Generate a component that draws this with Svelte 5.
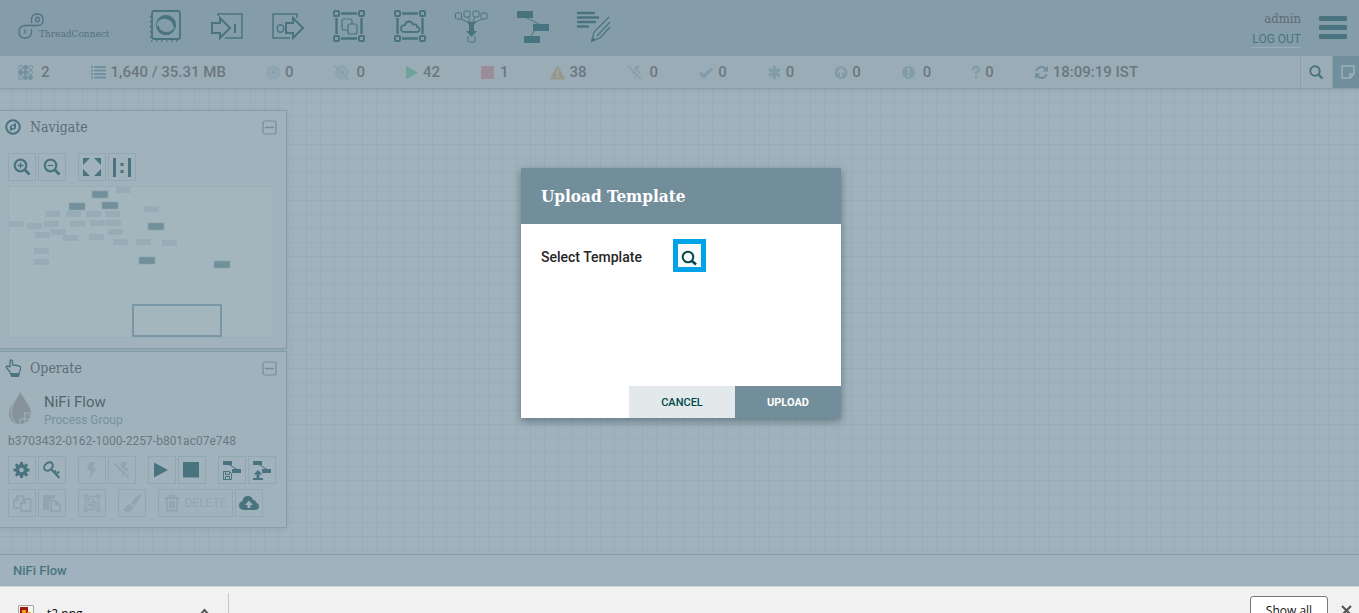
<script>
  const line = 'fill="none" stroke="currentColor"';
  const solid = 'fill="currentColor"';
  const corners = `<g ${line} stroke-width="2"><rect x="1" y="1" width="5" height="5" rx="1"/><rect x="26" y="1" width="5" height="5" rx="1"/><rect x="1" y="26" width="5" height="5" rx="1"/><rect x="26" y="26" width="5" height="5" rx="1"/></g><path ${line} stroke-width="2.4" d="M8 3.5h16M8 28.5h16M3.5 8v16M28.5 8v16"/>`;
  const bolt = 'M7 1h5L9.500 6H13L6 15l1.500-6H4z';

  const tools = [
    { label: 'Processor', art: `<rect x="2" y="1" width="28" height="28" rx="2" ${line} stroke-width="1.800"/><path ${line} stroke-width="1.500" stroke-dasharray="1.500 3.500" d="M.5 6v25M1 31h28"/><circle cx="16" cy="15" r="9.500" ${line} stroke-width="1"/><path ${solid} d="M7 13Q7 6 16 5q9 1 10 10l-2 4q-1-9-8-10-5-1-9 4zM25 18q-2 7-9 7-7 0-9.500-7l2-3q1 7 8 7 4 0 8.500-4z"/>` },
    { label: 'Input Port', art: `<path ${line} stroke-width="1.500" d="M7 6V4h24v24H14"/><path ${line} stroke-width="2" d="M1 13h8V8l10 10L9 28v-5H1z"/><path ${line} stroke-width="2" d="M24 14v9"/>` },
    { label: 'Output Port', art: `<path ${line} stroke-width="1.500" d="M25 8V4H1v24h17"/><path ${line} stroke-width="2" d="M14 13h7V8l10 10-10 10v-5h-7z"/><ellipse cx="8.500" cy="18.500" rx="3.200" ry="3.800" ${line} stroke-width="1.500"/>` },
    { label: 'Process Group', art: `${corners}<rect x="9" y="9" width="10" height="11" rx="2" ${line} stroke-width="1.200"/><rect x="15" y="14" width="9" height="10" rx="2" fill="#859da9" stroke="currentColor" stroke-width="1.200"/>` },
    { label: 'Remote Process Group', art: `${corners}<path ${line} stroke-width="1.800" d="M11 22q-4 0-4-3.500 0-3 4-3.500 1-3.500 4-3.500 3 0 4 3 4-1 4 2.500 3 .500 2.500 3-.500 2-3 2z"/>` },
    { label: 'Funnel', art: `<g ${line} stroke-width="1"><rect x=".5" y="3" width="6" height="6" rx="1"/><rect x="9" y="1" width="6" height="6" rx="1"/><rect x="18" y="1" width="6" height="6" rx="1"/><rect x="26" y="3" width="6" height="6" rx="1"/><path d="M6 9l6 3M13 7l2 4M20 7l-2 4M27 9l-6 3"/><path d="M13 26v5q0 1 1 1h5q1 0 1-1v-5"/></g><path ${solid} d="M11 11q5 1.500 11 0l-3 4v6h3l-5.500 6-5.500-6h3v-6z"/>` },
    { label: 'Template', art: `<path ${line} d="M9 7l14 7-8 12"/><path ${solid} d="M1 1h16v7H1zM17 14h16v7H17zM8 26h16v7H8z"/>` },
    { label: 'Label', art: `<path ${line} stroke-width="2.500" stroke-linecap="round" d="M1 3h16M1 7.500h20M1 12h17M1 16.500h10"/><path ${line} stroke-width="1.200" d="M32 7L17 22l-2 9 8-3L33 17M33 12L20 26"/><path ${solid} d="M15 27l4 3-5 2z"/>` }
  ];

  const stats = [
    { w: 18, text: '2', label: 'Active threads', c: '#7390a0', art: `<g ${line} stroke-width="1"><circle cx="2.500" cy="2.500" r="2"/><circle cx="12.500" cy="2.500" r="2"/><circle cx="12.500" cy="7.500" r="2"/><circle cx="2.500" cy="12.500" r="2"/></g><g ${solid}><circle cx="7.500" cy="2.500" r="2.400"/><circle cx="2.500" cy="7.500" r="2.400"/><circle cx="7.500" cy="7.500" r="2.400"/><circle cx="7.500" cy="12.500" r="2.400"/><circle cx="12.500" cy="12.500" r="2.400"/></g>` },
    { w: 15, text: '1,640 / 35.31 MB', label: 'Queued', c: '#7390a0', art: `<path ${line} stroke-width="2.200" d="M0 2h2M3 2h12M0 5.500h2M3 5.500h12M0 9h2M3 9h12M0 12.500h2M3 12.500h12"/>` },
    { w: 13, text: '0', label: 'Transmitting', c: '#86a0ad', art: `<g ${line} stroke-width="1.200"><circle cx="6.500" cy="7.500" r="6"/><circle cx="6.500" cy="7.500" r="3.800"/></g><circle cx="6.500" cy="7.500" r="2" ${solid}/>` },
    { w: 17, text: '0', label: 'Not transmitting', c: '#86a0ad', art: `<g ${line} stroke-width="1.200"><circle cx="8" cy="7.500" r="6.200"/><circle cx="8" cy="7.500" r="4"/><circle cx="8" cy="7.500" r="1.500"/><path d="M0 0l15 15" stroke-width="1.600"/></g>` },
    { w: 12, text: '42', label: 'Running', c: '#6ba496', art: `<path ${solid} d="M0 1l12 6.500L0 14z"/>` },
    { w: 14, text: '1', label: 'Stopped', c: '#9a8d97', art: `<path ${solid} d="M0 1h13v13H0z"/>` },
    { w: 15, text: '38', label: 'Invalid', c: '#96988b', art: `<path fill="currentColor" stroke="currentColor" stroke-width="1" stroke-linejoin="round" d="M7.500 1L14.500 14H.500z"/><path d="M7.500 5v4.500M7.500 11v2" stroke="#9aadb7" stroke-width="1.800"/>` },
    { w: 17, text: '0', label: 'Disabled', c: '#86a0ad', art: `<path ${solid} d="${bolt}"/><path fill="none" stroke="#9aadb7" stroke-width="1.500" d="M2 1l13 13"/><path ${line} stroke-width="1.500" d="M0 1l13 13"/>` },
    { w: 14, text: '0', label: 'Up to date', c: '#829ca9', art: `<path ${line} stroke-width="3.200" d="M1 7.500l4 4L13 3.500"/>` },
    { w: 13, text: '0', label: 'Locally modified', c: '#829ca9', art: `<path ${line} stroke-width="3.200" d="M6.500 1v13M1 4.200l11 6.600M12 4.200L1 10.800"/>` },
    { w: 12, text: '0', label: 'Stale', c: '#829ca9', art: `<circle cx="6" cy="7.500" r="6.500" ${solid}/><path fill="none" stroke="#9aadb7" stroke-width="2" d="M6 12V5M2.500 7.800L6 4.300l3.500 3.500"/>` },
    { w: 16, text: '0', label: 'Locally modified and stale', c: '#829ca9', art: `<circle cx="6.500" cy="7.500" r="6.500" ${solid}/><path stroke="#9aadb7" stroke-width="2" d="M6.500 3v5.500M6.500 10v2"/>` },
    { w: 8, text: '0', label: 'Sync failure', c: '#829ca9', art: `<path ${line} stroke-width="2.300" d="M1 5q0-3 3-3t3 2.500Q7 6.500 4 7.500v2.200M4 11v2.500"/>` },
    { w: 13, text: '18:09:19 IST', label: 'Last refreshed', c: '#6f8d9b', art: `<path ${line} stroke-width="2" d="M1.500 6q1-4 5-4 3 0 4.500 2.500M11.500 9q-1 4-5 4-3 0-4.500-2.500"/><path ${solid} d="M13 1v5.500H7.500zM0 14V8.500h5.500z"/>` }
  ];

  const lens = `<circle cx="7.500" cy="7.500" r="5.800" ${line} stroke-width="2.200"/><path ${line} stroke-width="2.800" d="M11.500 11.500l5 5"/>`;
  const navButtons = [
    [{ label: 'Zoom in', art: lens + `<path ${line} stroke-width="1.300" d="M4.500 7.500h6M7.500 4.500v6"/>` }, { label: 'Zoom out', art: lens + `<path ${line} stroke-width="1.300" d="M4.500 7.500h6"/>` }],
    [{ label: 'Fit', art: `<path ${solid} d="M0 0h7L0 7zM18 0v7l-7-7zM0 18v-7l7 7zM18 18h-7l7-7z"/>` }, { label: 'Actual size', art: `<path ${solid} d="M0 0h3v19H0zM15 0h3v19h-3zM7.500 5h3v3h-3zM7.500 12h3v3h-3z"/>` }]
  ];

  const tpl = `<path ${line} d="M5 3l10 6"/><path ${solid} d="M0 0h9v4H0zM9 8h9v4H9z"/>`;
  const opRows = [
    [
      [
        { label: 'Configuration', art: `<circle cx="8.500" cy="9" r="4.200" ${line} stroke-width="3.800"/><path ${line} stroke-width="3" d="M8.500 1v3M8.500 14v3M.500 9h3M13.500 9h3M2.800 3.300l2 2M12.200 12.700l2 2M14.200 3.300l-2 2M4.800 12.700l-2 2"/>` },
        { label: 'Access policies', art: `<ellipse cx="5.500" cy="5.500" rx="4.800" ry="3.600" transform="rotate(-40 5.500 5.500)" ${line} stroke-width="2"/><path ${line} stroke-width="2" d="M8 8l8.500 9M13 13.500l3-3M11 11.500l2-2"/>` }
      ],
      [
        { label: 'Enable', off: true, art: `<path ${solid} d="M6 1h6L10 7h4L6 18l2-8H4z"/>` },
        { label: 'Disable', off: true, art: `<path ${solid} d="M9 1h5L12 7h4L8 18l2-8H6z"/><path fill="none" stroke="#a0b3bd" stroke-width="1.500" d="M3 2l15 15"/><path ${line} stroke-width="1.800" d="M1 2l15 15"/>` }
      ],
      [
        { label: 'Start', art: `<path ${solid} d="M1 1.500L15 9 1 16.500z"/>` },
        { label: 'Stop', art: `<path ${solid} d="M0 1h16v15.500H0z"/>` }
      ],
      [
        { label: 'Create template', art: `${tpl}<path ${line} d="M.500 10.500h6l2 2v6h-8zM2.500 10.500v3h4v-3M2.500 18.500v-3h4v3"/>` },
        { label: 'Upload template', art: `${tpl}<path ${solid} d="M5 9l4.500 4.500H6.500V17h-3v-3.500H.500zM0 17h10v2H0z"/>` }
      ]
    ],
    [
      [
        { label: 'Copy', off: true, art: `<path ${line} stroke-width="1.800" d="M7 14H1V6l4-4h5v4M5 2v4H1M8 17V9l4-4h5.500v12zM12 5v4H8"/>` },
        { label: 'Paste', off: true, art: `<path ${solid} d="M0 1h12v4H8L6 8v8H0z"/><path ${line} stroke-width="1.800" d="M8 7h5l4 4v6.500H8zM13 7v4h4"/>` }
      ],
      [{ label: 'Group', off: true, art: `<g ${line} stroke-width="1.300"><path d="M1 1h3v3H1zM14 1h3v3h-3zM1 14h3v3H1zM14 14h3v3h-3zM4 2.500h10M4 15.500h10M2.500 4v10M15.500 4v10"/><rect x="5" y="5" width="6" height="6" rx="1"/><rect x="8" y="8" width="5" height="5" rx="1"/></g>` }],
      [{ label: 'Change color', off: true, art: `<path ${solid} d="M17 0q2 1 0 4l-6 8-3-3 6-7q2-2 3-2zM7 10l3 3q0 5-5 5-4 0-5-3 3 0 3-2 1-3 4-3z"/>` }],
      [
        { label: 'Delete', text: 'DELETE', off: true, art: `<path ${line} stroke-width="1.800" d="M1 4h14M3 4v12.500h10V4M5.500 4V1.500h5V4M6 7v7M8 7v7M10 7v7"/>` },
        { label: 'Upload', art: `<path ${solid} d="M4 16q-5-.500-5-4.500Q-1 8 2.500 7 3 2 8 2q4 0 5 4 3 0 3 2.500 3 1 3 4 0 3.500-4 3.500z"/><path fill="#a0b3bd" d="M9 6.500l4 4.500h-2.500v3h-3v-3H5z"/>` }
      ]
    ]
  ];

  const components = [[116, 187], [144, 206], [45, 211], [66, 211], [86, 211], [105, 211], [9, 221], [27, 223], [44, 221], [70, 221], [90, 220], [106, 220], [35, 232], [51, 229], [63, 235], [89, 234], [108, 229], [113, 239], [136, 239], [162, 240], [34, 248], [34, 259]];
  const groups = [[92, 191], [69, 203], [102, 202], [148, 223], [139, 257], [214, 261]];
</script>

{#snippet icon(art, w, h)}
  <svg width={w} height={h} viewBox="0 0 {w} {h}" aria-hidden="true">{@html art}</svg>
{/snippet}

{#snippet buttonRow(row)}
  <div class="buttons">
    {#each row as set}
      <div class="set">
        {#each set as b}
          <button class="tool" class:wide={b.text} disabled={b.off} aria-label={b.label}>
            {@render icon(b.art, 18, 19)}{#if b.text}<span>{b.text}</span>{/if}
          </button>
        {/each}
      </div>
    {/each}
  </div>
{/snippet}

{#snippet collapse(label)}
  <button class="collapse" aria-label={label}>
    {@render icon(`<rect x="1" y="1" width="13" height="13" rx="2" ${line} stroke-width="1.200"/><path ${line} stroke-width="1.500" d="M3 7.500h9"/>`, 15, 15)}
  </button>
{/snippet}

<div class="window">
  <div class="app">
    <header>
      <div class="logo">
        {@render icon(`<g ${line} stroke-width="1.300"><path d="M13.500 10V7q0-6 6-6 5.500 0 5.500 6 0 5.500-5.500 5.500H7Q1 13 1 19q0 6 6 6t6.500-6v-3" /><ellipse cx="19.500" cy="6.500" rx="1.800" ry="2.300"/><path d="M7 16.500v4"/></g>`, 27, 27)}
        <span>ThreadConnect</span>
      </div>
      <nav class="components" aria-label="Components">
        {#each tools as t}
          <button aria-label={t.label}>{@render icon(t.art, 33, 33)}</button>
        {/each}
      </nav>
      <div class="user">
        <span>admin</span>
        <a href="#logout">LOG OUT</a>
      </div>
      <button class="menu" aria-label="Menu"><i></i><i></i><i></i></button>
    </header>

    <div class="status">
      <div class="stats">
        {#each stats as s}
          <div class="stat" title={s.label}>
            <span class="glyph" style:color={s.c}>{@render icon(s.art, s.w, 15)}</span>
            <span>{s.text}</span>
          </div>
        {/each}
      </div>
      <button class="search" aria-label="Search">
        {@render icon(`<circle cx="6" cy="6" r="4.700" ${line} stroke-width="2"/><path ${line} stroke-width="2.400" d="M9.500 9.500l4 4"/>`, 15, 15)}
      </button>
      <button class="bulletin" aria-label="Bulletins">
        {@render icon(`<path fill="none" stroke="#9db1bb" stroke-width="1.500" d="M9 13H1V1h12v8zM9 13V9h4"/>`, 14, 14)}
      </button>
    </div>

    <main>
      <section class="panel">
        <div class="head">
          {@render icon(`<circle cx="8" cy="8" r="6.800" ${line} stroke-width="2"/><path ${solid} d="M11 4v5.500L5 12V7z"/><circle cx="8" cy="8" r="1.300" fill="#a0b3bd"/>`, 16, 16)}
          <h2>Navigate</h2>
          {@render collapse('Collapse Navigate')}
        </div>
        <div class="body nav-body">
          {@render buttonRow(navButtons)}
          <svg class="map" viewBox="9 187 264 150" width="264" height="150" role="img" aria-label="Birdseye">
            {#each components as [x, y]}<rect {x} {y} width="15" height="6" fill="#97acb7" />{/each}
            {#each groups as [x, y]}<rect {x} {y} width="16" height="7" fill="#71909c" stroke="#8ba2ac" stroke-width=".6" />{/each}
            <rect x="133" y="305" width="88" height="31" fill="none" stroke="#7594a5" stroke-width="1.800" />
          </svg>
        </div>
      </section>

      <section class="panel">
        <div class="head">
          {@render icon(`<path ${line} stroke-width="1.300" stroke-linejoin="round" d="M5 13L1 8q1-2 4 0V2q1-2 2.500 0v4q6 0 8 2 .500 3-1.500 6v2H6z"/><path ${solid} d="M6 14h8v4H6z"/>`, 16, 18)}
          <h2>Operate</h2>
          {@render collapse('Collapse Operate')}
        </div>
        <div class="body">
          <div class="context">
            <svg width="24" height="33" viewBox="0 0 24 33" aria-hidden="true">
              <path d="M12 0C17 9 23 14 23 21c0 7-4 11-11 11S1 28 1 21C1 14 8 9 12 0z" fill="#87939b" />
              <path d="M11 2Q3 14 3 21q0 6 4 9" fill="none" stroke="#a0b3bd" />
              <path d="M17 21v6M22 22v5M12 27h11M17 27v5M12 27v5M22 27v3M16 21h6" fill="none" stroke="#a0b3bd" />
            </svg>
            <div>
              <div class="name">NiFi Flow</div>
              <div class="type">Process Group</div>
            </div>
          </div>
          <div class="uuid">b3703432-0162-1000-2257-b801ac07e748</div>
          {#each opRows as row}{@render buttonRow(row)}{/each}
        </div>
      </section>
    </main>

    <footer>NiFi Flow</footer>

    <div class="veil">
      <div class="dialog" role="dialog" aria-labelledby="dialog-title">
        <h1 id="dialog-title">Upload Template</h1>
        <div class="content">
          <label for="browse">Select Template</label>
          <button id="browse" class="browse" aria-label="Browse for template">
            {@render icon(`<circle cx="7" cy="7" r="5.300" ${line} stroke-width="2"/><path ${line} stroke-width="2.500" d="M11 11l4 3.500"/>`, 16, 16)}
          </button>
        </div>
        <div class="actions">
          <button class="cancel">CANCEL</button>
          <button class="upload">UPLOAD</button>
        </div>
      </div>
    </div>
  </div>

  <div class="downloads">
    <button class="file">
      <svg width="16" height="16" viewBox="0 0 16 16" aria-hidden="true">
        <path d="M.5.5h15v15H.5z" fill="#f6f6ec" stroke="#a8a8a8" />
        <path d="M2 2h8v6H2z" fill="#a5190d" /><path d="M4 5h4v3H4zM9 7h4v3H9z" fill="#f0a51e" /><path d="M2 9h11v5H2z" fill="#c93d12" />
      </svg>
      <span>t2.png</span>
      {@render icon(`<path ${line} stroke-width="2" d="M1 7l4.500-5L10 7"/>`, 11, 11)}
    </button>
    <button class="all">Show all</button>
    <button class="close" aria-label="Close">
      {@render icon(`<path ${line} stroke-width="2.200" d="M1 1l9 9M10 1l-9 9"/>`, 11, 11)}
    </button>
  </div>
</div>

<style>
  :global(body) { margin: 0; overflow: hidden; }
  .window { --ink: #49747f; --slab: "Roboto Slab", "DejaVu Serif Condensed", "DejaVu Serif", serif; height: 100vh; display: flex; flex-direction: column; font-family: Roboto, sans-serif; color: #6c7780; }
  .window :global(svg) { display: block; flex: none; overflow: visible; }
  button { font: inherit; color: inherit; background: none; border: 0; padding: 0; margin: 0; }
  h1, h2 { margin: 0; font-family: var(--slab); }
  .app { flex: 1; min-height: 0; position: relative; display: flex; flex-direction: column; }

  header { flex: none; height: 56px; display: flex; align-items: center; background: #859da9; color: var(--ink); }
  .logo { width: 132px; padding-left: 18px; display: flex; align-items: center; color: #566f85; font: 10px var(--slab); }
  .logo :global(svg) { margin-bottom: 4px; }
  .logo span { margin: 10px 0 0 -6px; }
  .components { display: flex; gap: 28px; margin-bottom: 3px; }
  .user { margin-left: auto; display: flex; flex-direction: column; align-items: flex-end; gap: 2px; font-size: 12px; line-height: 16px; }
  .user span { font: 13px/20px var(--slab); color: #5d6c77; }
  .user a { color: var(--ink); text-decoration: none; border-bottom: 1px solid #9aadb9; }
  .menu { width: 28px; margin: 0 12px 2px 18px; display: grid; gap: 4px; }
  .menu i { height: 5px; border-radius: 1px; background: var(--ink); }

  .status { flex: none; height: 32px; display: flex; background: #9aadb7; border-bottom: 1px solid #86a0ab; box-shadow: 0 1px 4px #7d97a580; z-index: 1; }
  .stats { flex: 1; display: flex; align-items: center; gap: 41px; padding-left: 18px; font-size: 15px; font-weight: 500; white-space: nowrap; }
  .stat { display: flex; align-items: center; gap: 5px; }
  .search, .bulletin { display: grid; place-items: center; color: var(--ink); border-left: 1px solid #86a0ad; width: 32px; }
  .bulletin { width: 27px; padding-left: 4px; background: #708e9b; }

  main { flex: 1; min-height: 0; display: flex; flex-direction: column; align-items: flex-start; gap: 2px; padding-top: 21px; background: linear-gradient(90deg, #98adb7 1px, transparent 1px) 12px 13px / 14px 14px, linear-gradient(#98adb7 1px, transparent 1px) 12px 13px / 14px 14px, #a0b3bc; }
  .panel { box-sizing: border-box; width: 287px; background: #a0b3bd; border: 1px solid #849daa; border-left: 0; box-shadow: 0 1px 5px #7890a066; }
  .head { height: 32px; display: flex; align-items: center; padding: 0 9px 0 5px; color: var(--ink); }
  h2 { margin-left: 9px; font-size: 14px; font-weight: 400; color: #5b6c77; }
  .collapse { margin-left: auto; color: #708f9d; }
  .body { padding: 8px 0 10px 8px; }
  .nav-body { padding-top: 10px; }
  .buttons { display: flex; gap: 12px; margin-bottom: 5px; }
  .body > .buttons:last-child { margin-bottom: 0; }
  .set { display: flex; gap: 2px; }
  .tool { box-sizing: border-box; width: 28px; height: 28px; display: flex; align-items: center; justify-content: center; border: 1px solid #91a8b3; color: var(--ink); font-size: 12px; }
  .tool:disabled { color: #8fa6b1; }
  .wide { width: 75px; gap: 2px; }
  .map { border: 1px solid #99aeb8; background: #a3b5bd; }
  .window .map { overflow: hidden; }
  .context { display: flex; gap: 12px; height: 41px; }
  .name { font-size: 15px; line-height: 20px; color: #53656e; }
  .type { font-size: 12px; line-height: 16px; color: #7592a0; }
  .uuid { font-size: 12px; line-height: 16px; margin-bottom: 7px; }

  footer { flex: none; box-sizing: border-box; height: 32px; padding-left: 13px; border-top: 1px solid #859ca8; background: #9fb2bd; color: var(--ink); font-size: 13px; font-weight: 500; line-height: 32px; }

  .veil { position: absolute; inset: 0; z-index: 2; padding-left: 3px; display: grid; place-items: center; }
  .dialog { width: 320px; height: 250px; display: flex; flex-direction: column; background: #fff; box-shadow: 0 3px 8px #3a505c99; }
  h1 { padding: 0 20px; background: #728e9b; color: #fff; font-size: 17px; font-weight: 700; line-height: 56px; }
  .content { flex: 1; display: flex; align-items: flex-start; gap: 31px; padding: 15px 20px; }
  label { font-size: 14px; font-weight: 500; line-height: 36px; color: #262626; }
  .browse { box-sizing: border-box; width: 33px; height: 33px; padding: 5px 0 0 0; display: grid; place-items: center; border: 5px solid #00a2e8; background: #f9fafb; color: #004849; }
  .actions { display: flex; justify-content: flex-end; height: 32px; font-size: 11px; font-weight: 500; }
  .actions button { width: 106px; }
  .cancel { background: #e3e8eb; color: #004849; }
  .upload { background: #728e9b; color: #fff; font-weight: 700; }

  .downloads { flex: none; box-sizing: border-box; height: 27px; display: flex; align-items: flex-start; overflow: hidden; background: #f1f1f1; border-top: 1px solid #cfd3d6; color: #222; font: 12px "Open Sans", sans-serif; }
  .file { height: 40px; width: 229px; margin-top: 6px; padding: 0 18px; display: flex; align-items: center; gap: 13px; border-right: 1px solid #c4c4c4; color: #111; }
  .file :global(svg:last-child) { margin-left: auto; color: #555; }
  .all { box-sizing: border-box; height: 28px; width: 78px; margin: 9px 13px 0 auto; border: 1px solid #777; border-radius: 3px; background: #fff; color: #111; }
  .close { margin: 18px 7px 0 0; color: #555; }
</style>
